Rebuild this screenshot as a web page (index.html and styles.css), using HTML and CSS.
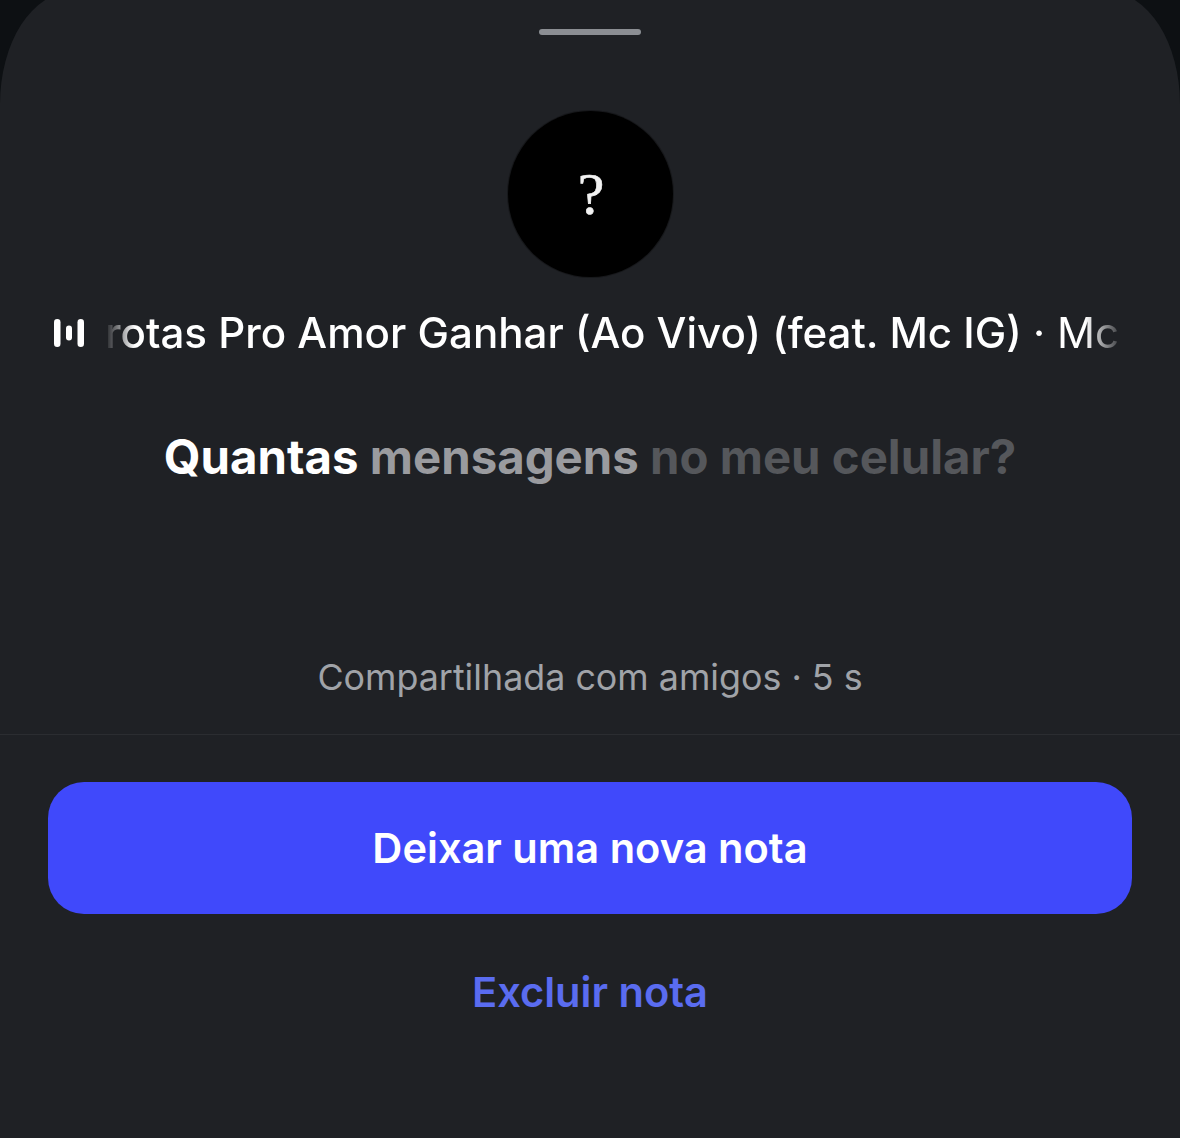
FILE: index.html
```html
<!DOCTYPE html>
<html lang="pt-BR">
<head>
<meta charset="utf-8">
<title>Nota</title>
<link rel="stylesheet" href="styles.css">
</head>
<body>
<main class="sheet">
  <div class="handle"></div>
  <div class="avatar"><span class="avatar-mark">?</span></div>
  <div class="track">
    <svg class="bars" viewBox="0 0 30 28" width="30" height="28" aria-hidden="true">
      <rect x="0" y="0" width="6.5" height="28" rx="3.25"/>
      <rect x="12" y="6.5" width="6" height="15" rx="3"/>
      <rect x="23.5" y="0" width="6.5" height="28" rx="3.25"/>
    </svg>
    <div class="marquee"><span class="marquee-text">rotas Pro Amor Ganhar (Ao Vivo) (feat. Mc IG) <span class="artist">· Mc</span></span></div>
  </div>
  <p class="lyric"><span class="on">Quantas</span> <span class="mid">mensagens</span> <span class="off">no meu celular?</span></p>
  <p class="meta">Compartilhada com amigos · 5 s</p>
  <div class="divider"></div>
  <div class="actions">
    <button class="primary" type="button">Deixar uma nova nota</button>
    <button class="link" type="button">Excluir nota</button>
  </div>
</main>
</body>
</html>
```
FILE: styles.css
```css
html, body {
  margin: 0;
  height: 100%;
  background: #0d1013;
}
body {
  overflow: hidden;
  font-family: Inter, "Liberation Sans", sans-serif;
}
.sheet {
  box-sizing: border-box;
  width: 1180px;
  height: 1146px;
  margin-top: -8px;
  padding-top: 37px;
  background: #1f2125;
  border-radius: 72px 72px 0 0 / 112px 112px 0 0;
  display: flex;
  flex-direction: column;
  align-items: center;
}
.handle {
  width: 102px;
  height: 6px;
  border-radius: 3px;
  background: #8b8e93;
}
.avatar {
  margin-top: 76px;
  width: 165px;
  height: 166px;
  border-radius: 50%;
  background: #000;
  box-shadow: 0 0 0 1px #17181b;
  display: flex;
  align-items: center;
  justify-content: center;
}
.avatar-mark {
  padding-left: 2px;
  font-family: "Liberation Serif", serif;
  font-size: 60px;
  line-height: 1;
  color: #f2f2f2;
  -webkit-text-stroke: 0.6px #f2f2f2;
}
.track {
  margin-top: 30px;
  align-self: stretch;
  padding-left: 54px;
  display: flex;
  align-items: center;
  gap: 21px;
  height: 52px;
}
.bars { fill: #fff; flex: none; }
.marquee {
  width: 1030px;
  overflow: hidden;
  white-space: nowrap;
  -webkit-mask-image: linear-gradient(to right, transparent 0, #000 30px, #000 980px, transparent 1020px);
  mask-image: linear-gradient(to right, transparent 0, #000 30px, #000 980px, transparent 1020px);
  font-size: 42.1px;
  line-height: 52px;
  font-weight: 500;
  color: #fff;
}
.artist { font-weight: 400; }
.lyric {
  margin: 71px 0 0;
  font-size: 47.35px;
  line-height: 54px;
  font-weight: 700;
  white-space: nowrap;
}
.on { color: #fff; }
.mid { color: #9a9b9f; }
.off { color: #55575b; }
.meta {
  margin: 171px 0 0;
  font-size: 35.85px;
  line-height: 44px;
  color: #a0a3a8;
}
.divider {
  margin-top: 35px;
  align-self: stretch;
  height: 1px;
  background: #2b2d31;
}
.actions {
  margin-top: 47px;
  align-self: stretch;
  padding: 0 48px;
  display: flex;
  flex-direction: column;
  align-items: stretch;
}
.primary {
  height: 132px;
  padding: 2px 0 0;
  border: 0;
  border-radius: 36px;
  background: #4049fb;
  color: #fff;
  font: 600 41.6px/1 Inter, "Liberation Sans", sans-serif;
}
.link {
  margin-top: 51px;
  height: 52px;
  border: 0;
  background: none;
  color: #5a6cf0;
  font: 600 41.6px/52px Inter, "Liberation Sans", sans-serif;
}
```
